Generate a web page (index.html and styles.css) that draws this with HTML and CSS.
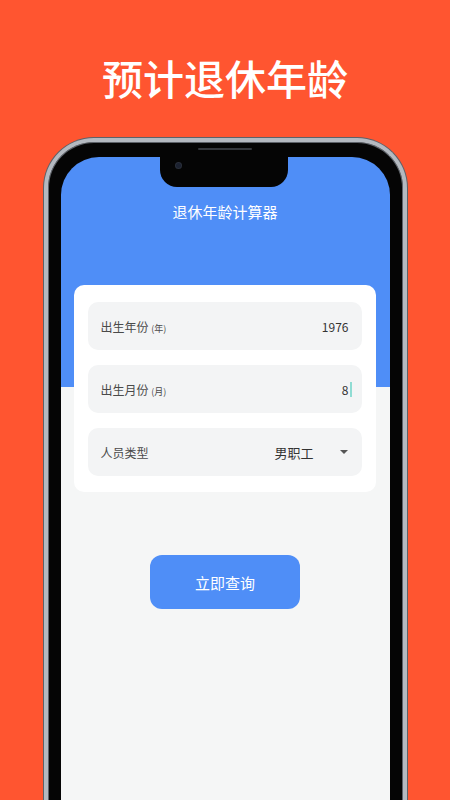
FILE: index.html
```html
<!DOCTYPE html>
<html>
  <head>
    <meta charset="utf-8">
    <link rel="stylesheet" href="styles.css">
  </head>
  <body>
    <h1 class="promo-title">预计退休年龄</h1>
    <div class="phone">
      <span class="speaker"></span>
      <div class="screen">
        <div class="notch"><span class="camera"></span></div>
        <div class="app-title">退休年龄计算器</div>
        <div class="form-card">
          <div class="form-row">
            <span class="row-label">出生年份 <small>(年)</small></span>
            <span class="row-value">1976</span>
          </div>
          <div class="form-row">
            <span class="row-label">出生月份 <small>(月)</small></span>
            <span class="row-value">8<span class="cursor"></span></span>
          </div>
          <div class="form-row">
            <span class="row-label">人员类型</span>
            <span class="row-select">
              <span class="select-value">男职工</span>
              <span class="select-arrow"></span>
            </span>
          </div>
        </div>
        <div class="actions">
          <button class="query-button">立即查询</button>
        </div>
      </div>
    </div>
  </body>
</html>
```

FILE: styles.css
```css
html,
body {
  margin: 0;
  padding: 0;
  height: 100%;
  overflow: hidden;
}

body {
  background: #ff5530;
  font-family: "Noto Sans CJK SC", "Noto Sans", sans-serif;
}

.promo-title {
  margin: 0;
  padding-top: 52px;
  height: 138px;
  box-sizing: border-box;
  text-align: center;
  color: #fff;
  font-size: 41px;
  font-weight: 500;
  line-height: 50px;
}

.phone {
  position: relative;
  width: 363px;
  height: 680px;
  margin: 0 auto;
  box-sizing: border-box;
  padding: 15px 13px 0;
  background: #050505;
  border: 4px solid #b4b9c0;
  border-bottom: none;
  border-radius: 50px 50px 0 0;
  box-shadow: 0 0 0 1px #5d6269, inset 0 0 0 1px #5d6269;
}

.speaker {
  position: absolute;
  top: 6px;
  left: 150px;
  width: 54px;
  height: 2px;
  border-radius: 1px;
  background: #34373c;
}

.screen {
  position: relative;
  height: 100%;
  border-radius: 38px 38px 0 0;
  background: linear-gradient(#4f8ef7 0, #4f8ef7 230px, #f5f6f6 230px);
  overflow: hidden;
}

.notch {
  position: absolute;
  top: 0;
  left: 50%;
  width: 128px;
  height: 30px;
  margin-left: -65px;
  background: #050505;
  border-radius: 0 0 17px 17px;
}

.camera {
  position: absolute;
  top: 6px;
  left: 16px;
  width: 5px;
  height: 5px;
  border-radius: 50%;
  background: #1b2130;
  box-shadow: 0 0 0 1px #2a2f3a;
}

.app-title {
  padding-top: 45px;
  text-align: center;
  color: #fff;
  font-size: 15px;
  line-height: 20px;
}

.form-card {
  margin: 63px 14px 0 13px;
  padding: 17px 14px 16px;
  background: #fff;
  border-radius: 10px;
  display: flex;
  flex-direction: column;
  gap: 15px;
}

.form-row {
  height: 48px;
  padding: 0 13px;
  background: #f3f4f5;
  border-radius: 10px;
  display: flex;
  align-items: center;
  justify-content: space-between;
}

.row-label {
  color: #4a4a4a;
  font-size: 12px;
}

.row-label small {
  font-size: 9px;
}

.row-value {
  display: flex;
  align-items: center;
  color: #333;
  font-size: 12px;
}

.cursor {
  width: 2px;
  height: 15px;
  margin-left: 1px;
  margin-right: -3px;
  background: #8fdcd3;
}

.row-select {
  display: flex;
  align-items: center;
  gap: 26px;
}

.select-value {
  color: #333;
  font-size: 13px;
}

.select-arrow {
  width: 0;
  height: 0;
  border-left: 4px solid transparent;
  border-right: 4px solid transparent;
  border-top: 4px solid #555;
  margin-right: 1px;
}

.actions {
  display: flex;
  justify-content: center;
  margin-top: 63px;
}

.query-button {
  width: 150px;
  height: 54px;
  border: none;
  border-radius: 12px;
  background: #4f8ef7;
  color: #fff;
  font-family: "Noto Sans CJK SC", "Noto Sans", sans-serif;
  font-size: 15px;
}
```
